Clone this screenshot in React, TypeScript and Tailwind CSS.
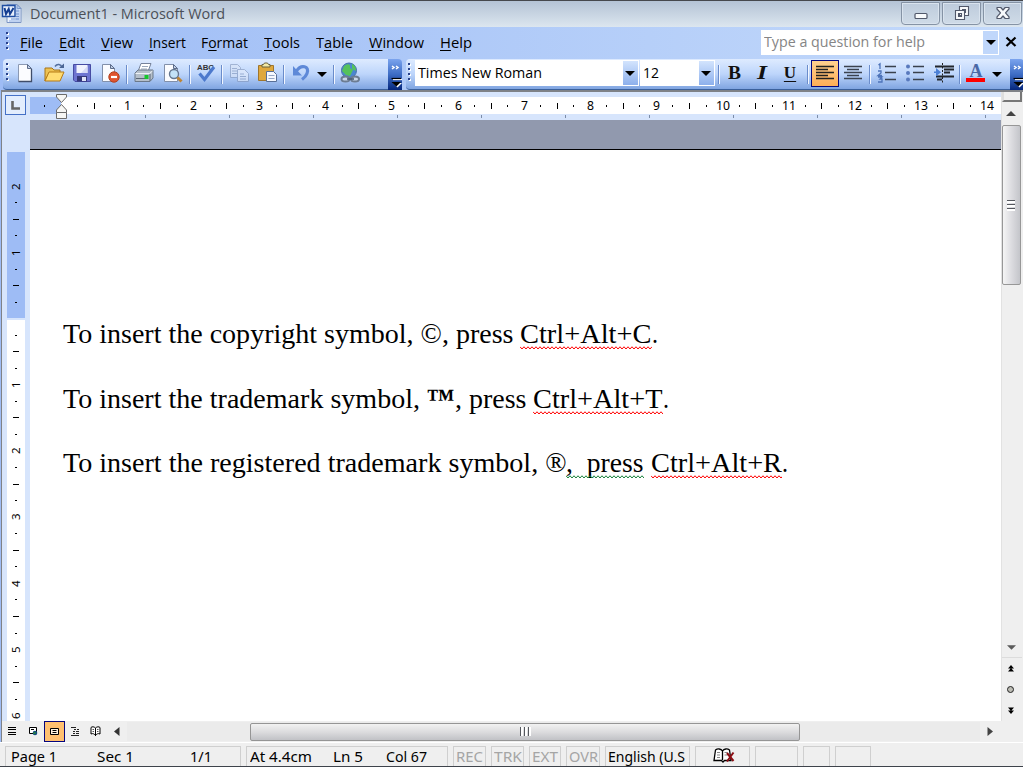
import React, { useLayoutEffect, useRef, useState } from "react";

/** Text stretched to an exact advance width. */
function Fit({ w, children, className = "" }: { w: number; children: React.ReactNode; className?: string }) {
  const ref = useRef<HTMLSpanElement>(null);
  const [scale, setScale] = useState(1);
  useLayoutEffect(() => {
    if (ref.current && ref.current.offsetWidth) setScale(w / ref.current.getBoundingClientRect().width);
  }, [w]);
  return (
    <span className={"inline-block shrink-0 whitespace-pre " + className} style={{ width: w }}>
      <span ref={ref} className="inline-block origin-left whitespace-pre" style={{ transform: `scaleX(${scale})` }}>
        {children}
      </span>
    </span>
  );
}

const Sep = ({ className = "" }: { className?: string }) => (
  <div className={"h-[19px] w-[2px] shrink-0 border-l border-[#6a8ccb] bg-[#f1f6ff] " + className} />
);

const Handle = ({ className = "" }: { className?: string }) => (
  <svg width="4" height="18" viewBox="0 0 4 18" className={"shrink-0 " + className}>
    {[1, 6, 11, 16].map((y) => (
      <g key={y}>
        <rect x="1" y={y} width="2" height="2" fill="#fff" />
        <rect x="0" y={y - 1} width="2" height="2" fill="#27418b" />
      </g>
    ))}
  </svg>
);

const Down = ({ className = "" }: { className?: string }) => (
  <svg width="10" height="5" viewBox="0 0 10 5" className={"shrink-0 " + className}>
    <path d="M0 0H10L5 5Z" fill="#000" />
  </svg>
);

function Slot({ children, className = "w-7" }: { children: React.ReactNode; className?: string }) {
  return (
    <div className={"flex h-[26px] shrink-0 items-center justify-center pb-[2px] " + className}>
      <svg width="22" height="22" viewBox="0 0 22 22">{children}</svg>
    </div>
  );
}

function Cap() {
  return (
    <div className="h-[31px] w-[14px] shrink-0 rounded-tr bg-linear-to-b from-[#7ba4ee] via-[#3d6cc4] to-[#06267c]">
      <svg width="14" height="31" viewBox="0 0 14 31">
        <path d="M4 7l2 1.500l-2 1.500M8 7l2 1.500l-2 1.500" stroke="#fff" strokeWidth="1.500" fill="none" />
        <path d="M5 20.500H14" stroke="#fff" strokeWidth="1.300" />
        <path d="M5 24H14L9.500 28.500Z" fill="#fff" />
        <path d="M3.500 19.500H13" stroke="#000" strokeWidth="1.200" />
        <path d="M3.500 23H13L8.300 27.500Z" fill="#000" />
      </svg>
    </div>
  );
}

const menus = [
  { k: "F", pre: "", post: "ile", w: 23, cls: "w-[39px]" },
  { k: "E", pre: "", post: "dit", w: 26, cls: "w-[42px]" },
  { k: "V", pre: "", post: "iew", w: 32, cls: "w-[48px]" },
  { k: "I", pre: "", post: "nsert", w: 37, cls: "w-[52px]" },
  { k: "o", pre: "F", post: "rmat", w: 47, cls: "w-[63px]" },
  { k: "T", pre: "", post: "ools", w: 36, cls: "w-[52px]" },
  { k: "a", pre: "T", post: "ble", w: 37, cls: "w-[53px]" },
  { k: "W", pre: "", post: "indow", w: 55, cls: "w-[71px]" },
  { k: "H", pre: "", post: "elp", w: 32, cls: "w-[40px]" },
];

const winBtn =
  "flex h-[23px] w-[39px] items-center justify-center rounded-b-[4px] border border-[#8593a5] bg-linear-to-b from-[#bdcbdc] to-[#cfdbe7] shadow-[inset_0_0_0_1px_#d9e3ee]";

function TitleBar() {
  return (
    <div className="flex h-[27px] shrink-0 items-start border-t border-[#46484d] bg-linear-to-b from-[#b4c3d5] to-[#dce6ef]">
      <svg width="22" height="24" viewBox="0 0 22 24" className="ml-px mt-px shrink-0">
        <path d="M6 2.500h10l4 4v14H6z" fill="#eef4fd" stroke="#7b95c4" />
        <path d="M16 2.500v4h4z" fill="#b3c8e8" stroke="#7b95c4" />
        <path d="M15 4l4 4v12H8v-2h7z" fill="#8fb0e6" opacity=".5" />
        <path d="M10 17h8M15 9h3M15 12h3M15 14.500h3" stroke="#6f92cf" />
        <rect x="1.500" y="3.500" width="12.500" height="11" fill="#e9f0fc" stroke="#1f4ea2" strokeWidth="1.500" />
        <path d="M3.500 6L5 12L7.700 7L9 12L12.500 6" fill="none" stroke="#163f91" strokeWidth="2" />
      </svg>
      <Fit w={195} className="ml-[7px] font-['Open_Sans',sans-serif] text-[14.500px] leading-[25px] text-[#4b5058]">
        Document1 - Microsoft Word
      </Fit>
      <div className="ml-auto mr-px mt-px flex gap-[2px]">
        <div className={winBtn}>
          <svg width="14" height="14" viewBox="0 0 14 14">
            <rect x="1" y="6.500" width="12" height="5" rx="1" fill="#f8fafc" stroke="#51586a" strokeWidth="1.200" />
          </svg>
        </div>
        <div className={winBtn}>
          <svg width="18" height="18" viewBox="0 0 18 18" fill="#f8fafc" stroke="#51586a" strokeWidth="1.100" fillRule="evenodd">
            <path d="M6.500 1.500h9v9h-9zM9.500 4.500h3v3h-3z" />
            <path d="M2.500 5.500h9v9h-9zM5.500 8.500h3v3h-3z" />
          </svg>
        </div>
        <div className={winBtn}>
          <svg width="16" height="14" viewBox="0 0 16 14" className="-mt-px">
            <path d="M2 1.500h3.800L8 4l2.200-2.500H14V3L10.500 6.800L14 10.800v1.700h-3.800L8 10l-2.200 2.500H2v-1.700L5.500 6.800L2 3z" fill="#f8fafc" stroke="#51586a" strokeWidth="1.200" strokeLinejoin="round" />
          </svg>
        </div>
      </div>
    </div>
  );
}

function MenuBar() {
  return (
    <div className="flex h-8 shrink-0 items-center font-['Open_Sans',sans-serif] text-[14.500px] leading-[24px] text-black">
      <Handle className="ml-[6px] mr-[10px] -mt-1" />
      {menus.map((m) => (
        <div key={m.post} className={"shrink-0 " + m.cls}>
          <Fit w={m.w}>
            {m.pre}
            <span className="underline underline-offset-2">{m.k}</span>
            {m.post}
          </Fit>
        </div>
      ))}
      <div className="-mt-[2px] ml-auto flex h-[25px] w-[238px] shrink-0 border border-white bg-white">
        <Fit w={161} className="ml-[2px] leading-[22px] text-[#858585]">Type a question for help</Fit>
        <div className="ml-auto flex w-[15px] items-center justify-center bg-[#c0d7fb]">
          <Down />
        </div>
      </div>
      <svg width="12" height="12" viewBox="0 0 12 12" className="-mt-[3px] ml-[6px] mr-[6px] shrink-0">
        <path d="M1.500 1.500L10.500 10M10.500 1.500L1.500 10" stroke="#000" strokeWidth="2.200" />
      </svg>
    </div>
  );
}

const barBg = "bg-linear-to-b from-[#deebff] via-[#bdd5fb] to-[#80a5e1]";

function Combo({ text, w, className }: { text: string; w: number; className: string }) {
  return (
    <div className={"flex h-[26px] shrink-0 border border-white bg-white " + className}>
      <Fit w={w} className="ml-[2px] font-['Open_Sans',sans-serif] text-[14.500px] leading-[23px] text-black">{text}</Fit>
      <div className="ml-auto flex w-[15px] items-center justify-center bg-linear-to-b from-[#d3e4fd] to-[#8db0ec]">
        <Down className="-ml-px" />
      </div>
    </div>
  );
}

const styleBtn = "flex w-[28px] shrink-0 justify-center pb-[2px] font-['Liberation_Serif',serif] font-bold leading-[24px] text-[#111] ";

function Toolbars() {
  return (
    <div className="flex h-[31px] shrink-0">
      <div className={"ml-[3px] flex w-[385px] shrink-0 items-center rounded-l border-b border-[#3b619c] " + barBg}>
        <Handle className="ml-[3px] mr-px -mt-1" />
        <Slot>
          <path d="M4.500 2.500h9l4 4v13h-13z" fill="#fbfcff" stroke="#8b99b3" />
          <path d="M17.500 7v12.500h-13" fill="none" stroke="#3f4d69" strokeWidth="1.300" />
          <path d="M13.500 2.500v4h4z" fill="#c6d3e8" stroke="#5d6d8c" />
        </Slot>
        <Slot className="w-[29px]">
          <path d="M2 6h7l2 2h6v3H6l-4 8z" fill="#edc253" stroke="#a87416" />
          <path d="M2 19l4-9h15l-4 9z" fill="#ffdc72" stroke="#b67a15" />
          <path d="M12 4.500c2-3 6-2.500 7 1" fill="none" stroke="#546f9e" strokeWidth="1.500" />
          <path d="M16 6h5V1.500z" fill="#4b6594" />
        </Slot>
        <Slot>
          <path d="M2.500 2.500h17v17H4l-1.500-1.500z" fill="#6d74d0" stroke="#464ba3" />
          <path d="M5.500 3h11v8h-11z" fill="#f0f2fd" />
          <path d="M16.500 4v7H10z" fill="#d4d9f5" />
          <path d="M6 14h10v5.500H6z" fill="#34387a" />
          <path d="M11 15h4v4h-4z" fill="#dfe3f6" />
        </Slot>
        <Slot>
          <path d="M3.500 2.500h8l4 4v13h-12z" fill="#fbfcff" stroke="#8290aa" />
          <path d="M11.500 2.500v4h4z" fill="#bfcde4" stroke="#5d6d8c" />
          <circle cx="15" cy="15" r="5.200" fill="#df5430" stroke="#b2401f" />
          <path d="M12 15h6" stroke="#fff" strokeWidth="2.200" />
        </Slot>
        <Sep className="ml-[2px] mr-px" />
        <Slot className="w-[29px]">
          <path d="M8 1.500h10l-3 8H5z" fill="#fff" stroke="#75829a" />
          <path d="M9 4.500h6M8 7h6" stroke="#9ba9bd" />
          <path d="M2 11l3-3h15v8l-3 3.500H2z" fill="#b5bfca" stroke="#6b7889" />
          <path d="M2.500 11.500h14L19.500 9" fill="none" stroke="#eef2f7" />
          <path d="M3 16.500h9M17 12v7" stroke="#5a6675" />
          <path d="M11.500 13h4v4h-4z" fill="#15c62b" />
        </Slot>
        <Slot className="w-[29px]">
          <path d="M2.500 2.500h9l4 4v13h-13z" fill="#fbfcff" stroke="#8290aa" />
          <path d="M11.500 2.500v4h4z" fill="#c6d3e8" stroke="#5d6d8c" />
          <circle cx="12" cy="12" r="4.500" fill="#c3e2f7" stroke="#657790" strokeWidth="1.400" />
          <path d="M15.500 15.500l4 4" stroke="#bd8535" strokeWidth="3" />
        </Slot>
        <Sep className="ml-[2px] mr-px" />
        <Slot>
          <text x="10.500" y="7.500" textAnchor="middle" fontFamily="Liberation Sans" fontWeight="bold" fontSize="8" textLength="17" lengthAdjust="spacingAndGlyphs" fill="#333">ABC</text>
          <path d="M4.500 11.500l5 6L19 5" fill="none" stroke="#4c79cd" strokeWidth="3.200" />
        </Slot>
        <Sep className="ml-px mr-px" />
        <Slot className="w-[29px]">
          <g opacity=".6" stroke="#8295b8">
            <path d="M2.500 2.500h7l3 3v10h-10z" fill="#dbe5f6" />
            <path d="M4 6.500h5M4 9h6M4 11.500h6" />
            <path d="M9.500 7.500h7l4 4v8h-11z" fill="#e7eefb" />
            <path d="M12 12h4M12 14.500h6M12 17h6" />
          </g>
        </Slot>
        <Slot>
          <path d="M2.500 3.500h15v15h-15z" fill="#dfa83d" stroke="#a0762c" />
          <path d="M6 5V2.500h1.500l1-1.500h3l1 1.500H14V5z" fill="#f3e9a6" stroke="#69623f" />
          <path d="M10.500 9.500h7l3 3v7h-10z" fill="#f6f9ff" stroke="#586f97" />
          <path d="M12.500 13.500h6M12.500 16.500h6" stroke="#97a8c7" />
        </Slot>
        <Sep className="ml-[2px] mr-[2px]" />
        <Slot>
          <path d="M6.500 9C11 2 20 4 17 11.500C16 14.500 14 16 12 17.500" fill="none" stroke="#5e89d8" strokeWidth="3.200" />
          <path d="M3 4v9.500h9z" fill="#5e89d8" />
        </Slot>
        <Down className="ml-[2px]" />
        <Sep className="ml-[6px] mr-px" />
        <Slot>
          <circle cx="10" cy="8.500" r="7.500" fill="#4a86d0" stroke="#446fa8" />
          <path d="M5 4c4-3 7-2 6 2l3 2-3 6-4-1-4-4zM13 2c3 1 4 4 4 7l-4-2z" fill="#55c25b" />
          <ellipse cx="6.500" cy="17" rx="4" ry="2.600" fill="#c8d6ea" stroke="#6c7c92" strokeWidth="2" />
          <ellipse cx="16" cy="17" rx="4" ry="2.600" fill="#c8d6ea" stroke="#6c7c92" strokeWidth="2" />
          <path d="M8 17h7" stroke="#4d5e75" strokeWidth="1.600" />
        </Slot>
      </div>
      <Cap />
      <div className={"ml-[4px] flex w-[604px] shrink-0 items-center rounded-l border-b border-[#3b619c] " + barBg}>
        <Handle className="ml-[2px] -mt-1 mr-[3px]" />
        <Combo text="Times New Roman" w={124} className="w-[224px] -mt-[2px]" />
        <Combo text="12" w={16} className="ml-px w-[75px] -mt-[2px]" />
        <Sep className="ml-[3px]" />
        <div className={styleBtn + "text-[18px]"}><Fit w={13}>B</Fit></div>
        <div className={styleBtn + "text-[18px] italic"}><Fit w={10}>I</Fit></div>
        <div className={styleBtn + "text-[17px] underline underline-offset-[3px]"}>U</div>
        <Sep className="ml-[3px]" />
        <div className="-mt-px ml-[2px] flex h-[27px] w-[28px] shrink-0 items-center justify-center border border-[#05057d] bg-linear-to-b from-[#ffd08f] to-[#ffad55]">
          <svg width="18" height="16" viewBox="0 0 18 16" className="-mt-[2px] shrink-0">
            <path d="M0 1.500H18M0 4.500H12M0 7.500H18M0 10.500H12M0 13.500H18" stroke="#222" strokeWidth="1.400" />
          </svg>
        </div>
        <Slot>
          <path d="M2 4.500H20M5 7.500H17M2 10.500H20M5 13.500H17M2 16.500H20" stroke="#3b424e" strokeWidth="1.500" />
        </Slot>
        <Sep className="ml-[2px] mr-[2px]" />
        <Slot>
          <path d="M9 4.500H20M9 10.500H20M9 17.500H20" stroke="#39414d" strokeWidth="1.500" />
          <g fill="none" stroke="#4d73b9" strokeWidth="1.300">
            <path d="M2.500 3L4 1.800V7M2 9h3v2L2 13.500h4M2 15h4l-2 2h2v3H2" />
          </g>
        </Slot>
        <Slot>
          <path d="M9 4.500H20M9 10.500H20M9 17.500H20" stroke="#39414d" strokeWidth="1.500" />
          <g fill="#5879bd">
            <circle cx="4" cy="4.500" r="2" />
            <circle cx="4" cy="11" r="2" />
            <circle cx="4" cy="17.500" r="2" />
          </g>
        </Slot>
        <Slot className="w-[30px]">
          <path d="M2 4.500H21M11 7.500H21M11 10.500H17M3 14.500H21M4 17.500H9" stroke="#22262d" strokeWidth="1.900" />
          <path d="M9.500 1V21" stroke="#222" strokeDasharray="2 1.500" />
          <path d="M1 9.500h2V6l5 4.300-5 4V11H1z" fill="#4c80d6" />
        </Slot>
        <Sep />
        <Slot>
          <path d="M2 16h19v4H2z" fill="#f00" />
          <text x="12" y="14.500" textAnchor="middle" fontFamily="Liberation Serif" fontWeight="bold" fontSize="18" fill="#4a68a6">A</text>
        </Slot>
        <Down className="ml-[3px]" />
      </div>
      <Cap />
    </div>
  );
}

const hCells = Array.from({ length: 58 }, (_, i) => i - 1);
const vCells = Array.from({ length: 33 }, (_, i) => i - 8);

function HorizontalRuler() {
  return (
    <div className="flex h-[28px] w-[971px] shrink-0 flex-col pt-[5px]">
      <div className="relative flex h-[17px] bg-[linear-gradient(to_right,#9ebcf5_31px,#fff_31px)] pl-[6.500px] font-['Noto_Sans',sans-serif] text-[12px] text-black">
        {hCells.map((k) => (
          <div key={k} className="flex w-[16.540px] shrink-0 items-center justify-center">
            {k === 0 ? null : k % 4 === 0 ? (
              <Fit w={k >= 40 ? 14 : 7} className="leading-[17px]">{k / 4}</Fit>
            ) : (
              <div className={k % 2 === 0 ? "h-[6px] w-px bg-black" : "h-[2px] w-px bg-black"} />
            )}
          </div>
        ))}
        <svg width="13" height="27" viewBox="0 0 13 27" className="absolute -top-[4px] left-[25px]">
          <g fill="#f6f6f4" stroke="#6b6b6b">
            <path d="M1.500 1.500H11.500V4L6.500 9.500L1.500 4z" />
            <path d="M1.500 19.500V17L6.500 11.500L11.500 17V19.500z" />
            <path d="M1.500 19.500H11.500V25.500H1.500z" />
          </g>
        </svg>
      </div>
      <div className="flex gap-[83px] pl-[115px] pt-px">
        {Array.from({ length: 11 }, (_, i) => (
          <div key={i} className="h-[3px] w-px shrink-0 bg-[#7c8da8]" />
        ))}
      </div>
    </div>
  );
}

function VerticalRuler() {
  return (
    <div className="flex min-h-0 flex-1 overflow-hidden pl-[5px] pt-[37px]">
      <div className="h-full w-[18px] bg-[linear-gradient(to_bottom,#9ebcf5_166px,#d7e5fc_166px,#d7e5fc_168px,#fff_168px)] pr-px pt-[26px] font-['Noto_Sans',sans-serif] text-[11.500px] text-black">
        {vCells.map((k) => (
          <div key={k} className="flex h-[16.560px] items-center justify-center">
            {k === 0 ? null : k % 4 === 0 ? (
              <span className="-rotate-90 leading-none">{Math.abs(k / 4)}</span>
            ) : (
              <div className={k % 2 === 0 ? "h-px w-[6px] bg-black" : "h-px w-[2px] bg-black"} />
            )}
          </div>
        ))}
      </div>
    </div>
  );
}

function Squiggle({ w, color, children }: { w: number; color: string; children: string }) {
  return (
    <span className="relative inline-block">
      <Fit w={w}>{children}</Fit>
      <svg className="absolute bottom-0 left-0 overflow-hidden" width={w} height="4" viewBox={`0 0 ${w} 4`}>
        <polyline
          points={Array.from({ length: Math.ceil(w / 2) + 1 }, (_, i) => `${i * 2},${i % 2 ? 3 : 0.75}`).join(" ")}
          fill="none"
          stroke={color}
          strokeWidth="1"
        />
      </svg>
    </span>
  );
}

function Page() {
  return (
    <div className="flex w-[971px] shrink-0 flex-col">
      <div className="h-[30px] shrink-0 border-b border-black bg-[#9199ae]" />
      <div className="flex-1 bg-white pl-[32.500px] pt-[168px] font-['Liberation_Serif',serif] text-[28px] leading-[32px] text-black">
        <p className="mb-[33px] flex h-8">
          <Fit w={457.5}>{"To insert the copyright symbol, ©, press "}</Fit>
          <Squiggle w={131.5} color="#f00">Ctrl+Alt+C</Squiggle>
          <Fit w={6}>.</Fit>
        </p>
        <p className="mb-8 flex h-8">
          <Fit w={364}>{"To insert the trademark symbol, "}</Fit>
          <Fit w={28} className="font-bold">™</Fit>
          <Fit w={78.5}>{", press "}</Fit>
          <Squiggle w={129.5} color="#f00">Ctrl+Alt+T</Squiggle>
          <Fit w={6}>.</Fit>
        </p>
        <p className="flex h-8">
          <Fit w={503.5}>{"To insert the registered trademark symbol, ®"}</Fit>
          <Squiggle w={77.5} color="#16803a">{",  press"}</Squiggle>
          <Fit w={7.5}>{" "}</Fit>
          <Squiggle w={131} color="#f00">Ctrl+Alt+R</Squiggle>
          <Fit w={6}>.</Fit>
        </p>
      </div>
    </div>
  );
}

function VerticalScroll() {
  return (
    <div className="flex w-[21px] shrink-0 flex-col items-center border-l border-[#e2e2e2] bg-[#efefef]">
      <div className="h-[10px] w-[20px] shrink-0 border-2 border-t-0 border-[#777] border-l-[#ddd] bg-[#efefef]" />
      <svg width="10" height="5" viewBox="0 0 10 5" className="-ml-[2px] mt-[9px] shrink-0">
        <path d="M0 5L5 0L10 5z" fill="#444" />
      </svg>
      <div className="-ml-[2px] mt-[9px] flex h-[160px] w-[19px] shrink-0 flex-col items-center justify-center gap-px rounded-[2px] border border-[#979797] bg-linear-to-r from-[#f5f5f5] via-[#dcdce0] to-[#c4c5ca]">
        <div className="h-[3px] w-[8px] border-t border-[#55585e] bg-white" />
        <div className="h-[3px] w-[8px] border-t border-[#55585e] bg-white" />
        <div className="h-[3px] w-[8px] border-t border-[#55585e] bg-white" />
      </div>
      <svg width="9" height="5" viewBox="0 0 10 5" className="-ml-px mt-auto shrink-0">
        <path d="M0 0H10L5 5z" fill="#5a5a5a" />
      </svg>
      <div className="mt-[7px] flex h-[64px] w-full shrink-0 flex-col items-center border-t border-[#dcdcdc] pr-[3px] pt-[7px]">
        <svg width="8" height="8" viewBox="0 0 8 8" className="shrink-0"><path d="M4 0L7 3.500H1zM4 3L7 6.500H1z" fill="#000" /></svg>
        <svg width="9" height="9" viewBox="0 0 9 9" className="mt-[12px] shrink-0"><circle cx="4.500" cy="4.500" r="3" fill="#bcbcb4" stroke="#222" /></svg>
        <svg width="8" height="8" viewBox="0 0 8 8" className="mt-[13px] shrink-0"><path d="M1 0.500H7L4 4zM1 3.500H7L4 7z" fill="#000" /></svg>
      </div>
    </div>
  );
}

function BottomBar() {
  return (
    <div className="flex h-[21px] shrink-0 items-center bg-[#efefef]">
      <svg width="21" height="19" viewBox="0 0 21 19" className="shrink-0">
        <path d="M6 5.500h8M6 7.500h8M6 10.500h8M6 12.500h8" stroke="#000" />
      </svg>
      <svg width="21" height="19" viewBox="0 0 21 19" className="shrink-0">
        <path d="M6.500 5.500h7v6h-7z" fill="#fff" stroke="#000" />
        <path d="M8 7.500h3" stroke="#000" />
        <circle cx="12" cy="11" r="2.300" fill="#174e80" />
        <path d="M10.500 10h2v2h-2z" fill="#27863d" />
      </svg>
      <div className="flex h-[21px] w-[21px] shrink-0 items-center justify-center border border-[#05057d] bg-[#ffc070]">
        <svg width="9" height="9" viewBox="0 0 9 9"><path d="M.5 1.500h8v6h-8z" fill="#fff2df" stroke="#000" /><path d="M2.500 3.500h4M2.500 5.500h4" stroke="#000" /></svg>
      </div>
      <svg width="20" height="19" viewBox="0 0 20 19" className="shrink-0">
        <path d="M6 5.500h5M9 7.500h2M12 7.500h2M8 9.500h2M11 9.500h3M8 11.500h2M11 11.500h3M6 13.500h8" stroke="#222" />
      </svg>
      <svg width="20" height="19" viewBox="0 0 20 19" className="shrink-0">
        <path d="M10.500 6C9 4.500 7 4.500 6 5.500V12C8 11 9.500 12 10.500 13.500C11.500 12 13 11 15 12V5.500C14 4.500 12 4.500 10.500 6V14" fill="#fff" stroke="#000" />
        <path d="M7.500 7.500h1.500M7.500 9.500h1.500M12 7.500h1.500M12 9.500h1.500" stroke="#555" />
      </svg>
      <div className="ml-[2px] flex h-[19px] w-[893px] shrink-0 items-center bg-[#ebebeb]">
        <div className="flex h-full w-[20px] items-center justify-center bg-[#efefef]">
          <svg width="6" height="10" viewBox="0 0 6 10"><path d="M5.500 0V9L0 4.500z" fill="#333" /></svg>
        </div>
        <div className="ml-[123px] flex h-[18px] w-[550px] items-center justify-center gap-px rounded-[2px] border border-[#959595] bg-linear-to-b from-[#f2f2f2] via-[#dcdcde] to-[#c1c2c6]">
          <div className="h-[9px] w-[3px] border-l border-[#55585e] bg-white" />
          <div className="h-[9px] w-[3px] border-l border-[#55585e] bg-white" />
          <div className="h-[9px] w-[3px] border-l border-[#55585e] bg-white" />
        </div>
        <div className="ml-auto flex h-full w-[20px] items-center justify-center bg-[#efefef]">
          <svg width="6" height="10" viewBox="0 0 6 10"><path d="M.5 0V9L6 4.500z" fill="#444" /></svg>
        </div>
      </div>
    </div>
  );
}

const cell = "flex h-full shrink-0 items-center border border-b-0 border-[#cfcfcf] ";

function StatusBar() {
  return (
    <div className="flex h-[25px] shrink-0 border-b border-t border-t-white border-b-[#3e434b] bg-[#efefef] pl-[5px] pt-[3px] font-['Noto_Sans',sans-serif] text-[14px] leading-[19px] text-black">
      <div className="flex gap-[5px]">
        <div className={cell + "w-[236px]"}>
          <Fit w={46} className="ml-[5px]">Page 1</Fit>
          <Fit w={37} className="ml-[40px]">Sec 1</Fit>
          <Fit w={22} className="ml-[56px]">1/1</Fit>
        </div>
        <div className={cell + "w-[202px]"}>
          <Fit w={62} className="ml-[3px]">At 4.4cm</Fit>
          <Fit w={30} className="ml-[21px]">Ln 5</Fit>
          <Fit w={41} className="ml-[23px]">Col 67</Fit>
        </div>
        <div className={cell + "w-[33px] justify-center text-[#a5a5a5]"}><Fit w={27}>REC</Fit></div>
        <div className={cell + "w-[33px] justify-center text-[#a5a5a5]"}><Fit w={28}>TRK</Fit></div>
        <div className={cell + "w-[32px] justify-center text-[#a5a5a5]"}><Fit w={26}>EXT</Fit></div>
        <div className={cell + "w-[34px] justify-center text-[#a5a5a5]"}><Fit w={29}>OVR</Fit></div>
        <div className={cell + "w-[85px]"}><Fit w={77} className="ml-[2px]">English (U.S</Fit></div>
        <div className={cell + "w-[55px] pl-[17px]"}>
          <svg width="22" height="17" viewBox="0 0 22 17" className="-mt-[2px]">
            <path d="M9.500 4C8 1.500 4.500 1.500 2.500 3L1 13.500H8.500L10 15L11.500 13.500H18L16.500 3C14.500 1.500 11 1.500 9.500 4V13" fill="#fff" stroke="#000" strokeWidth="1.300" />
            <path d="M4 5.500h3M4 8h3M4 10.500h3M11.500 5.500h3M11.500 8h3" stroke="#888" />
            <path d="M14 6L20.500 14M20.500 5.500L14 14.500" stroke="#8b0d13" strokeWidth="2" />
          </svg>
        </div>
        <div className={cell + "w-[43px]"} />
        <div className={cell + "w-[27px]"} />
        <div className={cell + "w-[36px]"} />
      </div>
    </div>
  );
}

export default function App() {
  return (
    <div className="flex h-[767px] w-[1023px] flex-col overflow-hidden bg-linear-to-r from-[#9ebcf5] to-[#c4dafb]">
      <TitleBar />
      <MenuBar />
      <Toolbars />
      <div className="ml-px flex h-[652px] shrink-0 flex-col border-l border-t-2 border-[#7f8287] bg-[#efefef]">
        <div className="flex h-[629px] shrink-0">
          <div className="flex w-[28px] shrink-0 flex-col bg-[#d7e5fc]">
            <div className="ml-[3px] mt-[3px] flex h-[20px] w-[21px] shrink-0 items-center justify-center border border-[#4470c6] bg-[#e3edfd]">
              <svg width="9" height="9" viewBox="0 0 9 9"><path d="M1.500 0V7.500H9" fill="none" stroke="#666" strokeWidth="2.600" /></svg>
            </div>
            <VerticalRuler />
          </div>
          <div className="flex shrink-0 flex-col bg-[#d7e5fc]">
            <HorizontalRuler />
            <div className="flex flex-1"><Page /></div>
          </div>
          <VerticalScroll />
        </div>
        <BottomBar />
      </div>
      <StatusBar />
    </div>
  );
}
